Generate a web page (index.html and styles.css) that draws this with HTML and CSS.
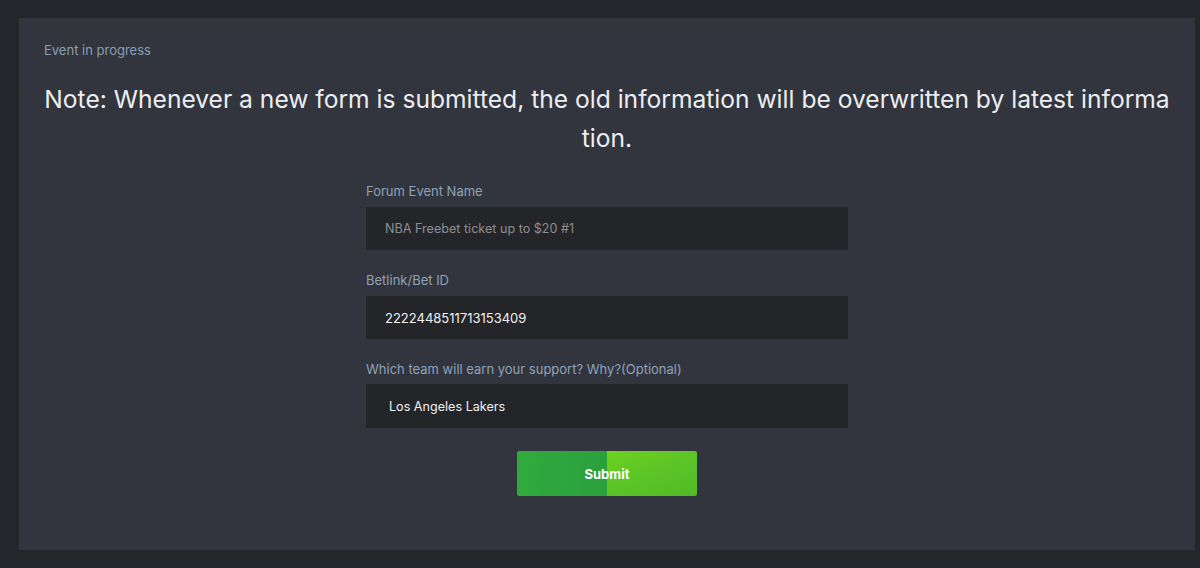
FILE: index.html
```html
<!DOCTYPE html>
<html>
<head>
<meta charset="utf-8">
<link rel="stylesheet" href="styles.css">
</head>
<body>
<div class="panel">
  <div class="status">Event in progress</div>
  <h1 class="note">Note: Whenever a new form is submitted, the old information will be overwritten by latest information.</h1>
  <form class="form">
    <label class="label">Forum Event Name</label>
    <div class="field placeholder">NBA Freebet ticket up to $20 #1</div>
    <label class="label">Betlink/Bet ID</label>
    <div class="field">2222448511713153409</div>
    <label class="label tight">Which team will earn your support? Why?(Optional)</label>
    <div class="field wide-pad">Los Angeles Lakers</div>
    <div class="actions"><button type="button" class="submit">Submit</button></div>
  </form>
</div>
</body>
</html>
```
FILE: styles.css
```css
html, body {
  margin: 0;
  padding: 0;
  background: #25262b;
  font-family: Inter, "Noto Sans", sans-serif;
  height: 100%;
}
body {
  padding: 18px 5px 18px 19px;
  box-sizing: border-box;
  overflow: hidden;
}
.panel {
  background: #32353d;
  height: 532px;
  box-sizing: border-box;
  padding: 24px 25px 0 25px;
}
.status {
  font-size: 13px;
  line-height: 16px;
  color: #8b9db4;
}
.note {
  margin: 22px -3px 0 -3px;
  font-size: 24.6px;
  font-weight: 400;
  line-height: 39px;
  color: #eceef1;
  text-align: center;
  word-break: break-all;
}
.form {
  width: 482px;
  margin: 25px auto 0 auto;
  display: flex;
  flex-direction: column;
}
.label {
  font-size: 13px;
  line-height: 16px;
  color: #8ea2ba;
  margin-bottom: 8px;
}
.label.tight { margin-bottom: 7px; }
.field {
  background: #242529;
  height: 43px;
  box-sizing: border-box;
  padding: 0 19px;
  display: flex;
  align-items: center;
  font-size: 13px;
  color: #eef0f2;
  margin-bottom: 22px;
}
.field.placeholder { color: #8d8e92; font-size: 12.6px; }
.field.wide-pad { padding-left: 23px; height: 44px; font-size: 12.6px; }
.actions {
  display: flex;
  justify-content: center;
  margin-top: 1px;
}
.submit {
  width: 180px;
  height: 45px;
  border: none;
  border-radius: 2px;
  font-family: Inter, "Noto Sans", sans-serif;
  font-weight: 700;
  font-size: 13px;
  color: #ffffff;
  background:
    linear-gradient(100deg, #31aa3c 0%, #2aa03e 100%) left / 50% 100% no-repeat,
    linear-gradient(160deg, #6fd21e 0%, #5bc427 50%, #52bb26 100%) right / 50% 100% no-repeat;
  cursor: pointer;
}
```
